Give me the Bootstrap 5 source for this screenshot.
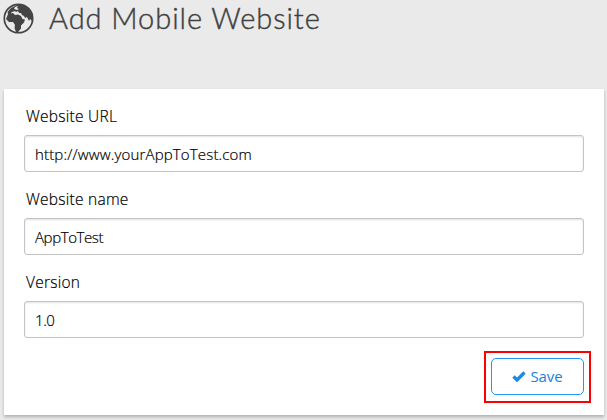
<!DOCTYPE html>
<html lang="en">
<head>
<meta charset="utf-8">
<meta name="viewport" content="width=device-width, initial-scale=1">
<title>Add Mobile Website</title>
<link rel="stylesheet" href="https://cdn.jsdelivr.net/npm/bootstrap@5.3.0/dist/css/bootstrap.min.css">
<style>
body{background:#eaeaea;font-family:"Open Sans","Noto Sans",sans-serif;font-weight:300;color:#222;height:420px;overflow:hidden}
.page-head{height:89px;padding-left:3px}
.page-head svg{margin-top:3px}
.page-title{font-family:Lato,"Open Sans",sans-serif;font-size:29px;font-weight:300;line-height:35px;color:#404040;margin-left:15px;letter-spacing:.95px;-webkit-text-stroke:.4px #404040}
.panel{margin:0 3px 0 4px;height:326px;padding:0 20px;box-shadow:0 2px 3px rgba(0,0,0,.25)}
.field{height:83px}
.form-label{font-size:15.500px;line-height:20px;padding:17px 0 0 2px;height:46px;color:#000;letter-spacing:.25px}
.form-control{height:37px;font-size:15px;font-weight:300;padding:0 10px;border:1px solid #c4c4c4;border-radius:3px;box-shadow:inset 0 1px 2px rgba(0,0,0,.12);color:#000}
.form-label,.form-control{-webkit-text-stroke:.2px #000}
#url{letter-spacing:.16px}
#name{letter-spacing:-.4px}
#version{letter-spacing:-.4px}
.highlight{border:2px solid #f00;padding:5px;margin:13px -7px 0 0;width:107px;height:52px}
.btn-save{--bs-btn-color:#1d80e0;--bs-btn-border-color:#2196f3;--bs-btn-border-radius:5px;width:93px;height:37px;font-size:15px;font-weight:400;letter-spacing:-.1px;background:#fff}
</style>
</head>
<body>
<header class="page-head d-flex align-items-start">
<svg width="31" height="31" viewBox="0 0 31 31"><circle cx="15.5" cy="15.5" r="14.2" fill="none" stroke="#444" stroke-width="1.7"/><path fill="#444" d="M4.5 9 8 5l6-3h7l5 4 3 6v6l-2-2-1 2-2-4-2 1-1-2-2-1-1-2-2 0-1-2-2 1-1-1-3 1-2 2H5zM5 11l5-1 2 2 3-.5 3 1.5 1.5 3 2.5.5-1 3-3 3v3l-3 3.5h-2l-1.5-4 .5-3-2-3H6l-3-3z"/><path fill="#eaeaea" d="m12 4 3-1-1 2 2 1-2 1-3-1z"/></svg>
<h1 class="page-title mb-0"><span>Add Mobile Website</span></h1>
</header>
<main class="panel bg-white">
<form>
<div class="field"><label class="form-label d-block mb-0" for="url"><span>Website URL</span></label><input class="form-control" id="url" type="text" value="http://www.yourAppToTest.com"></div>
<div class="field"><label class="form-label d-block mb-0" for="name"><span>Website name</span></label><input class="form-control" id="name" type="text" value="AppToTest"></div>
<div class="field"><label class="form-label d-block mb-0" for="version"><span>Version</span></label><input class="form-control" id="version" type="text" value="1.0"></div>
<div class="d-flex justify-content-end">
<div class="highlight"><button type="button" class="btn btn-save d-flex align-items-center justify-content-center gap-1 p-0"><svg width="14" height="11" viewBox="0 0 14 11"><path d="M1.5 5.5 5 9l7.5-7.5" fill="none" stroke="#1e88e5" stroke-width="3.3"/></svg><span>Save</span></button></div>
</div>
</form>
</main>
<script src="https://cdn.jsdelivr.net/npm/bootstrap@5.3.0/dist/js/bootstrap.bundle.min.js"></script>
</body>
</html>
